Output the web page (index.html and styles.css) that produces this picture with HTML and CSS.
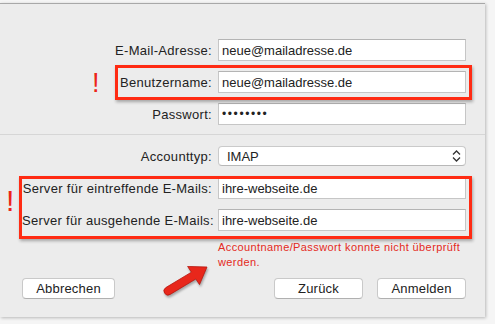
FILE: index.html
```html
<!DOCTYPE html>
<html lang="de">
<head>
  <meta charset="UTF-8" />
  <title>Account hinzufügen</title>
  <link rel="stylesheet" href="styles.css">
</head>
<body>

<div class="screen">
  <div class="sheet">

    <div class="section top">
      <label class="label">E-Mail-Adresse:</label>
      <input class="field" type="text" value="neue@mailadresse.de" readonly />
      <label class="label">Benutzername:</label>
      <input class="field" type="text" value="neue@mailadresse.de" readonly />
      <label class="label">Passwort:</label>
      <input class="field dots" type="text" value="••••••••" readonly />
    </div>

    <div class="section bottom">
      <label class="label">Accounttyp:</label>
      <div class="popup">
        <span>IMAP</span>
        <svg width="9" height="12" viewBox="0 0 9 12">
          <path d="M1 4.5 L4.5 1 L8 4.5 M1 7.5 L4.5 11 L8 7.5" fill="none" stroke="#333" stroke-width="1.3"/>
        </svg>
      </div>
      <label class="label">Server für eintreffende E-Mails:</label>
      <input class="field" type="text" value="ihre-webseite.de" readonly />
      <label class="label">Server für ausgehende E-Mails:</label>
      <input class="field" type="text" value="ihre-webseite.de" readonly />
      <div></div>
      <div class="error">Accountname/Passwort konnte nicht überprüft<br>werden.</div>
    </div>

    <div class="buttons">
      <button>Abbrechen</button>
      <div class="right">
        <button>Zurück</button>
        <button>Anmelden</button>
      </div>
    </div>

  </div>

  <!-- annotations drawn over the screenshot -->
  <div class="mark box-user"></div>
  <div class="mark box-server"></div>
  <span class="bang bang-user">!</span>
  <span class="bang bang-server">!</span>
  <svg class="arrow" width="54" height="40" viewBox="160 258 54 40">
    <path d="M170.2 294.4 L195.8 279 L199.5 284.6 L207 267 L187.6 266.4 L191.4 272.2 L165.8 287.6 A4 4 0 0 0 170.2 294.4 Z"
          fill="#e8271b" stroke="#b5170f" stroke-width="0.8" stroke-linejoin="round"/>
  </svg>
</div>

</body>
</html>
```

FILE: styles.css
```css
body {
  margin: 0;
  background: #f5f5f5;
  font-family: "Liberation Sans", Arial, sans-serif;
  font-size: 13px;
  color: #222;
}
.screen {
  position: relative;
  width: 495px;
  height: 324px;
  overflow: hidden;
}
.sheet {
  margin-top: 3px;
  width: 485px;
  height: 313px;
  background: #ececec;
  border-top: 1px solid #a8a8a8;
  box-shadow: 1px 1px 3px rgba(0, 0, 0, 0.25);
}
.section {
  display: grid;
  grid-template-columns: 190px 248px;
  column-gap: 6px;
  row-gap: 10px;
  padding-left: 22px;
  align-items: center;
}
.section.top {
  padding-top: 35px;
  padding-bottom: 9px;
  border-bottom: 1px solid #d6d6d6;
}
.section.bottom {
  padding-top: 11px;
}
.label {
  text-align: right;
  letter-spacing: 0.3px;
  white-space: nowrap;
}
.field {
  box-sizing: border-box;
  height: 22px;
  margin: 0;
  padding: 0 3px;
  border: 1px solid #c6c6c6;
  border-top-color: #b4b4b4;
  background: #fff;
  font-family: "Liberation Sans", Arial, sans-serif;
  font-size: 13px;
  color: #222;
  outline: none;
}
.dots {
  letter-spacing: 1.6px;
  font-size: 12px;
}
.popup {
  box-sizing: border-box;
  height: 20px;
  margin-bottom: 1px;
  display: flex;
  align-items: center;
  justify-content: space-between;
  padding: 0 4px 0 8px;
  background: #fff;
  border: 1px solid #cacaca;
  border-bottom-color: #b8b8b8;
  border-radius: 4px;
}
.error {
  margin-top: -1px;
  font-size: 11px;
  line-height: 15px;
  letter-spacing: 0.4px;
  white-space: nowrap;
  color: #e42a22;
}
.buttons {
  display: flex;
  justify-content: space-between;
  margin: 8px 19px 0 22px;
}
.buttons .right {
  display: flex;
  gap: 14px;
}
button {
  box-sizing: border-box;
  height: 21px;
  padding: 0;
  background: #fff;
  border: 1px solid #c9c9c9;
  border-bottom-color: #b0b0b0;
  border-radius: 4px;
  font-family: "Liberation Sans", Arial, sans-serif;
  font-size: 13px;
  letter-spacing: 0.2px;
  color: #222;
}
.buttons > button {
  width: 93px;
}
.right button {
  width: 89px;
}
.mark {
  position: absolute;
  box-sizing: border-box;
  border: 3px solid #ff2b13;
  box-shadow: 1px 2px 3px rgba(0, 0, 0, 0.3);
}
.box-user {
  left: 115px;
  top: 65px;
  width: 357px;
  height: 35px;
}
.box-server {
  left: 19px;
  top: 176px;
  width: 453px;
  height: 63px;
}
.bang {
  position: absolute;
  color: #ec2418;
  font-family: "Liberation Sans", sans-serif;
  line-height: 1;
}
.bang-user {
  left: 92px;
  top: 70px;
  font-size: 27px;
}
.bang-server {
  left: 6px;
  top: 186px;
  font-size: 30px;
}
.arrow {
  position: absolute;
  left: 160px;
  top: 258px;
  filter: drop-shadow(1px 2px 1px rgba(0, 0, 0, 0.3));
}
```
